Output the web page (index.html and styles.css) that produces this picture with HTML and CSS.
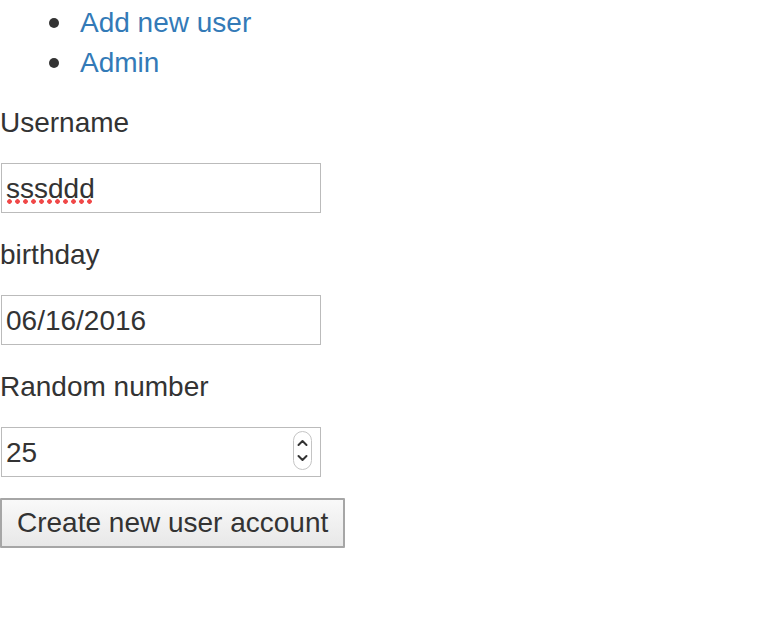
FILE: index.html
```html
<!DOCTYPE html>
<html>
<head>
<meta charset="utf-8">
<link rel="stylesheet" href="styles.css">
</head>
<body>
<ul class="nav">
  <li class="nav-item"><a href="#">Add new user</a></li>
  <li class="nav-item"><a href="#">Admin</a></li>
</ul>
<form class="form">
  <div class="field">
    <label class="label">Username</label>
    <div class="box">
      <input class="input" type="text" value="sssddd" spellcheck="false">
      <span class="spell"></span>
    </div>
  </div>
  <div class="field">
    <label class="label">birthday</label>
    <div class="box">
      <input class="input" type="text" value="06/16/2016">
    </div>
  </div>
  <div class="field">
    <label class="label">Random number</label>
    <div class="box">
      <input class="input" type="text" value="25">
      <span class="spinner">
        <svg width="19" height="39" viewBox="0 0 19 39">
          <rect x="0.5" y="0.5" width="18" height="38" rx="9" ry="9" fill="#fff" stroke="#c4c4c4"/>
          <path d="M5.5 14 L9.5 10 L13.5 14" fill="none" stroke="#333" stroke-width="2" stroke-linecap="round" stroke-linejoin="round"/>
          <path d="M5.5 25 L9.5 29 L13.5 25" fill="none" stroke="#333" stroke-width="2" stroke-linecap="round" stroke-linejoin="round"/>
        </svg>
      </span>
    </div>
  </div>
  <div class="actions">
    <button class="button" type="button">Create new user account</button>
  </div>
</form>
</body>
</html>
```
FILE: styles.css
```css
html, body {
  margin: 0;
  padding: 0;
  background: #fff;
}
body {
  font-family: "Liberation Sans", Arial, sans-serif;
  font-size: 28px;
  line-height: 40px;
  color: #333;
}
.nav {
  margin: 0 0 20px 0;
  padding: 2px 0 0 80px;
  list-style: none;
}
.nav-item {
  display: flex;
  align-items: center;
  height: 40px;
  padding-top: 1px;
  box-sizing: border-box;
}
.nav-item::before {
  content: "";
  width: 10px;
  height: 10px;
  border-radius: 50%;
  background: #333;
  margin-left: -31px;
  margin-right: 21px;
  flex: none;
}
.nav a {
  color: #337ab7;
  text-decoration: none;
}
.form {
  display: flex;
  flex-direction: column;
  gap: 21px;
}
.field {
  display: flex;
  flex-direction: column;
  gap: 21px;
}
.label {
  display: block;
  box-sizing: border-box;
  height: 40px;
  padding-top: 1px;
  line-height: 40px;
}
.box {
  position: relative;
  width: 320px;
  height: 50px;
  margin-left: 1px;
}
.input {
  box-sizing: border-box;
  width: 320px;
  height: 50px;
  margin: 0;
  padding: 1px 4px 0;
  border: 1px solid #bbb;
  font-family: "Liberation Sans", Arial, sans-serif;
  font-size: 28px;
  color: #333;
  background: #fff;
  outline: none;
}
.spell {
  position: absolute;
  left: 6px;
  top: 36px;
  width: 88px;
  height: 5px;
  background-image: radial-gradient(circle at 2.5px 2.5px, #f04848 2px, transparent 2.6px);
  background-size: 8px 5px;
  background-repeat: repeat-x;
}
.spinner {
  position: absolute;
  left: 292px;
  top: 4px;
  width: 19px;
  height: 39px;
  display: flex;
}
.actions {
  display: flex;
}
.button {
  box-sizing: border-box;
  height: 50px;
  margin: 0;
  padding: 0 15px;
  border: 2px solid #a6a6a6;
  border-radius: 1px;
  background: linear-gradient(#f9f9f9, #e8e8e8);
  font-family: "Liberation Sans", Arial, sans-serif;
  font-size: 28px;
  color: #333;
}
```
